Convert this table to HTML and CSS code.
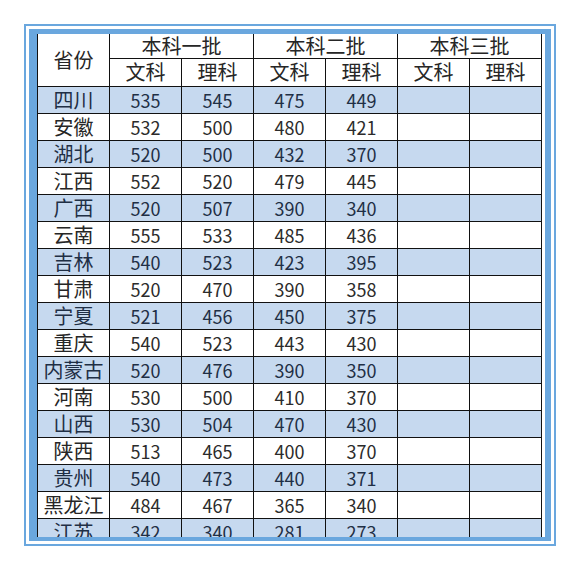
FILE: index.html
```html
<!DOCTYPE html>
<html lang="zh">
<head>
<meta charset="utf-8">
<link rel="stylesheet" href="styles.css">
</head>
<body>
<div class="frame">
  <div class="inner">
    <table class="score">
      <colgroup>
        <col><col><col><col><col><col><col>
      </colgroup>
      <thead>
        <tr class="h1">
          <th rowspan="2">省份</th>
          <th colspan="2">本科一批</th>
          <th colspan="2">本科二批</th>
          <th colspan="2">本科三批</th>
        </tr>
        <tr class="h2">
          <th>文科</th><th>理科</th><th>文科</th><th>理科</th><th>文科</th><th>理科</th>
        </tr>
      </thead>
      <tbody>
        <tr class="alt"><td class="p">四川</td><td>535</td><td>545</td><td>475</td><td>449</td><td></td><td></td></tr>
        <tr><td class="p">安徽</td><td>532</td><td>500</td><td>480</td><td>421</td><td></td><td></td></tr>
        <tr class="alt"><td class="p">湖北</td><td>520</td><td>500</td><td>432</td><td>370</td><td></td><td></td></tr>
        <tr><td class="p">江西</td><td>552</td><td>520</td><td>479</td><td>445</td><td></td><td></td></tr>
        <tr class="alt"><td class="p">广西</td><td>520</td><td>507</td><td>390</td><td>340</td><td></td><td></td></tr>
        <tr><td class="p">云南</td><td>555</td><td>533</td><td>485</td><td>436</td><td></td><td></td></tr>
        <tr class="alt"><td class="p">吉林</td><td>540</td><td>523</td><td>423</td><td>395</td><td></td><td></td></tr>
        <tr><td class="p">甘肃</td><td>520</td><td>470</td><td>390</td><td>358</td><td></td><td></td></tr>
        <tr class="alt"><td class="p">宁夏</td><td>521</td><td>456</td><td>450</td><td>375</td><td></td><td></td></tr>
        <tr><td class="p">重庆</td><td>540</td><td>523</td><td>443</td><td>430</td><td></td><td></td></tr>
        <tr class="alt"><td class="p">内蒙古</td><td>520</td><td>476</td><td>390</td><td>350</td><td></td><td></td></tr>
        <tr><td class="p">河南</td><td>530</td><td>500</td><td>410</td><td>370</td><td></td><td></td></tr>
        <tr class="alt"><td class="p">山西</td><td>530</td><td>504</td><td>470</td><td>430</td><td></td><td></td></tr>
        <tr><td class="p">陕西</td><td>513</td><td>465</td><td>400</td><td>370</td><td></td><td></td></tr>
        <tr class="alt"><td class="p">贵州</td><td>540</td><td>473</td><td>440</td><td>371</td><td></td><td></td></tr>
        <tr><td class="p">黑龙江</td><td>484</td><td>467</td><td>365</td><td>340</td><td></td><td></td></tr>
        <tr class="alt"><td class="p">江苏</td><td>342</td><td>340</td><td>281</td><td>273</td><td></td><td></td></tr>
      </tbody>
    </table>
  </div>
</div>
</body>
</html>
```

FILE: styles.css
```css
html, body {
  margin: 0;
  padding: 0;
  background: #ffffff;
}

body {
  font-family: "Noto Sans CJK SC", "Noto Sans", sans-serif;
  color: #2a2a2a;
}

.frame {
  margin: 24px 0 0 24px;
  width: 522px;
  border: 2px solid #6aa7de;
  padding: 3px;
}

.inner {
  border-style: solid;
  border-color: #6aa7de;
  border-width: 5px 6px 4px 8px;
  height: 503px;
  overflow: hidden;
  background: #ffffff;
}

.score {
  border-collapse: collapse;
  table-layout: fixed;
  width: 505px;
}

.score col {
  width: 72px;
}

.score th,
.score td {
  border: 1px solid #111111;
  padding: 0;
  text-align: center;
  vertical-align: middle;
  white-space: nowrap;
}

.score thead tr:first-child th {
  border-top: none;
}

.score th {
  font-weight: normal;
  font-size: 20px;
  line-height: 22px;
  color: #262626;
}

.h1 {
  height: 24px;
}

.h2 {
  height: 28px;
}

.score tbody tr {
  height: 27px;
}

.score td {
  font-size: 18px;
  line-height: 20px;
  color: #2b2b2b;
}

.score td.p {
  font-size: 20px;
  color: #262626;
}

.score tr.alt td {
  background: #c6d9ef;
  color: #1f2f45;
}
```
